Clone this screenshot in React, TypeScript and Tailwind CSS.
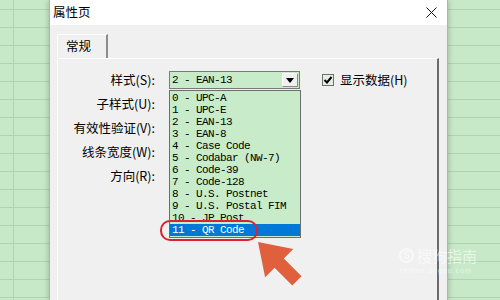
import React from 'react';

// Barcode type options shown in the open dropdown
const STYLES = [
  '0 - UPC-A',
  '1 - UPC-E',
  '2 - EAN-13',
  '3 - EAN-8',
  '4 - Case Code',
  '5 - Codabar (NW-7)',
  '6 - Code-39',
  '7 - Code-128',
  '8 - U.S. Postnet',
  '9 - U.S. Postal FIM',
  '10 - JP Post',
  '11 - QR Code',
];

const LABELS = ['样式(S):', '子样式(U):', '有效性验证(V):', '线条宽度(W):', '方向(R):'];

const CJK = "font-['Noto_Sans_CJK_SC','Noto_Sans',sans-serif]";
const MONO = "font-['Liberation_Mono',monospace] text-[11px] tracking-[-0.6px] leading-[12px]";

function StyleCombo() {
  return (
    <div className="relative w-[131px] h-[18px] border border-[#7a7a7a] bg-[#c8ecca] flex items-center">
      <span className={`${MONO} pl-[2px] whitespace-pre text-black flex-1`}>2 - EAN-13</span>
      <div className="w-[16px] h-[14px] mr-[1px] bg-[#f0f0f0] border-l border-t border-white border-r border-b border-r-[#8a8a8a] border-b-[#8a8a8a] flex items-center justify-center">
        <svg width="8" height="5" viewBox="0 0 8 5">
          <polygon points="0,0 8,0 4,5" fill="#000" />
        </svg>
      </div>

      {/* open list */}
      <div className="absolute left-[-1px] top-[18px] w-[132px] border border-[#6d6d6d] bg-[#c8ecca] pt-px pb-px">
        {STYLES.map((s, i) => (
          <div
            key={s}
            className={`${MONO} h-[12px] pl-[2px] whitespace-pre ${
              i === STYLES.length - 1 ? 'bg-[#0078d7] text-white' : 'text-black'
            }`}
          >
            {s}
          </div>
        ))}
      </div>
    </div>
  );
}

export default function App() {
  return (
    <div className="relative w-[500px] h-[300px] overflow-hidden bg-[#c7e9c8]">
      {/* spreadsheet grid behind the dialog */}
      <svg className="absolute left-0 top-0" width="500" height="300">
        <defs>
          <pattern id="rows" x="0" y="0" width="500" height="18" patternUnits="userSpaceOnUse">
            <rect x="0" y="9" width="500" height="1" fill="#b1d2b3" />
          </pattern>
        </defs>
        <rect width="500" height="300" fill="url(#rows)" />
        <rect x="13" y="0" width="1" height="300" fill="#b1d2b3" />
      </svg>

      {/* dialog window */}
      <div className={`absolute left-[49px] top-0 w-[399px] h-[300px] flex flex-col border-x border-[#c9a0d6] shadow-[0_0_6px_rgba(0,0,0,0.25)] ${CJK}`}>
        <div className="h-[25px] bg-white flex items-center justify-between pl-[3px] pr-[10px]">
          <span className="text-[12.5px] text-black">属性页</span>
          <svg width="11" height="11" viewBox="0 0 11 11">
            <path d="M0.5 0.5 L10.5 10.5 M10.5 0.5 L0.5 10.5" stroke="#111" strokeWidth="1" />
          </svg>
        </div>

        <div className="flex-1 bg-[#f0f0f0] pl-[7px] pr-[8px] pt-[9px] flex flex-col">
          {/* tab */}
          <div className="w-[51px] h-[24px] border-l border-t border-white border-r-2 border-r-[#8c8c8c] flex items-center pl-[8px] bg-[#f0f0f0] relative z-10">
            <span className="text-[12.5px] text-black">常规</span>
          </div>

          {/* tab panel */}
          <div className="flex-1 border-t border-l border-white border-r-2 border-r-[#6b6b6b] pt-[12px]">
            <div className="flex">
              <div className="flex flex-col gap-[6px] w-[97px] items-end">
                {LABELS.map((l) => (
                  <div key={l} className="h-[18px] flex items-center text-[12.5px] text-black whitespace-nowrap">
                    {l}
                  </div>
                ))}
              </div>
              <div className="ml-[14px]">
                <StyleCombo />
              </div>
              <div className="ml-[22px] h-[18px] flex items-center gap-[6px]">
                <svg width="12" height="12" viewBox="0 0 12 12">
                  <rect x="0.5" y="0.5" width="11" height="11" fill="#e3efe3" stroke="#707070" />
                  <path d="M2.5 6 L5 8.5 L9.5 3" stroke="#000" strokeWidth="2" fill="none" />
                </svg>
                <span className="text-[12.5px] text-black whitespace-nowrap">显示数据(H)</span>
              </div>
            </div>
          </div>
        </div>
      </div>

      {/* annotation: red ring around selected item */}
      <div className="absolute left-[160px] top-[220px] w-[98px] h-[21px] rounded-[10px] border-2 border-[#d9232e]" />

      {/* annotation: arrow */}
      <svg className="absolute left-0 top-0 pointer-events-none" width="500" height="300" viewBox="0 0 500 300">
        <polygon
          points="258,242 293.3,249.1 283.8,258.6 301.5,276.3 292.3,285.5 274.6,267.8 265.1,277.3"
          fill="#e0603e"
        />
      </svg>

      {/* watermark */}
      <div className="absolute left-[399px] top-[248px] flex flex-col items-start opacity-60">
        <div className="flex items-center gap-[3px]">
          <div className="w-[15px] h-[15px] rounded-full border-2 border-white flex items-center justify-center text-[10px] leading-none font-bold text-white font-['Liberation_Sans',sans-serif]">
            S
          </div>
          <span className={`text-[15px] leading-none text-white ${CJK}`}>搜狗指南</span>
        </div>
        <span className="text-[7px] tracking-[1px] text-white font-['Liberation_Sans',sans-serif] mt-[3px]">
          zhinan.sogou.com
        </span>
      </div>
    </div>
  );
}
